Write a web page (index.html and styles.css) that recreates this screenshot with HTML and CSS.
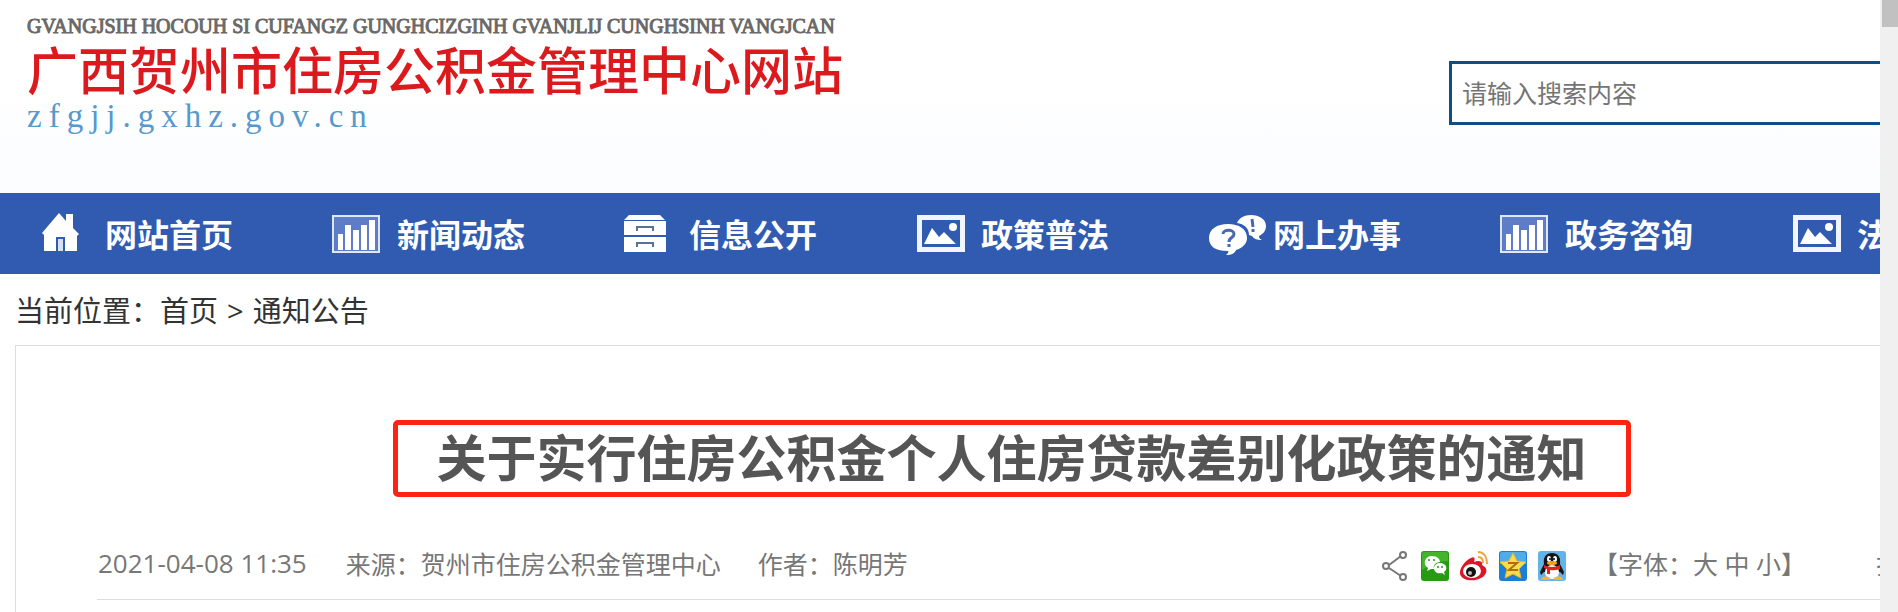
FILE: index.html
```
<!DOCTYPE html>
<html lang="zh-CN">
<head>
  <meta charset="utf-8">
  <meta name="viewport" content="width=device-width, initial-scale=1">
  <title>关于实行住房公积金个人住房贷款差别化政策的通知</title>
  <link rel="stylesheet" href="styles.css">
</head>
<body>

<!-- icons used more than once -->
<svg class="defs" aria-hidden="true">
  <symbol id="i-chart" viewBox="0 0 62 44">
    <rect x="3" y="4" width="46" height="36" fill="#5f7dc6" stroke="#dfe8fa" stroke-width="2"/>
    <path fill="#fff" d="M8 22h5v16H8zM15 13h6v25h-6zM23 18h6v20h-6zM31 13h6v25h-6zM39 8h6v30h-6z"/>
  </symbol>
  <symbol id="i-photo" viewBox="0 0 62 44">
    <path fill="#f0f5ff" fill-rule="evenodd" d="M3 3h48v37H3zM8 8v27h38V8z"/>
    <path fill="#fff" d="M10 32l8-16 7 9 5-5 12 12z"/>
    <circle cx="39" cy="15" r="4" fill="#fff"/>
  </symbol>
</svg>

<div class="window">
  <div class="view">
    <div class="page">

      <header class="header">
        <a class="logo" href="#">
          <span class="logo-za">GVANGJSIH HOCOUH SI CUFANGZ GUNGHCIZGINH GVANJLIJ CUNGHSINH VANGJCAN</span>
          <span class="logo-cn">广西贺州市住房公积金管理中心网站</span>
          <span class="logo-url">zfgjj.gxhz.gov.cn</span>
        </a>
        <form class="search">
          <input type="text" placeholder="请输入搜索内容" aria-label="搜索">
        </form>
      </header>

      <nav class="nav">
        <a href="#">
          <svg viewBox="0 0 62 44"><path fill="#fff" d="M4 21L21 1l7 8V2h7v14l6 6-2 2v15H27V25H18v14H6V23z"/><path fill="#d5e0f5" d="M20 27h5v12h-5z"/></svg>
          <span>网站首页</span>
        </a>
        <a href="#">
          <svg><use href="#i-chart"/></svg>
          <span>新闻动态</span>
        </a>
        <a href="#">
          <svg viewBox="0 0 62 44"><path fill="#fff" d="M7 3h31l5 5H2zM2 9h42v14H2zM2 25h42v15H2z"/><path fill="none" stroke="#56709f" stroke-width="2" d="M15 19v-4h16v4M15 35v-4h16v4"/></svg>
          <span>信息公开</span>
        </a>
        <a href="#">
          <svg><use href="#i-photo"/></svg>
          <span>政策普法</span>
        </a>
        <a href="#">
          <svg viewBox="0 0 62 44">
            <path fill="#fff" d="M45 3c8 0 15 4 15 11 0 5-3 8-7 10 0 2 1 3 3 4-5 0-8-1-10-4l-3-1c0-7-5-11-12-12 2-5 7-8 14-8z"/>
            <path fill="#fff" d="M22 12c11 0 19 5 19 14 0 6-5 10-11 12-1 3-4 5-10 5 2-2 3-3 2-4C10 39 3 35 3 26s8-14 19-14z"/>
            <path fill="none" stroke="#4968ad" stroke-width="3" d="M17 22c0-5 11-5 11 0 0 4-5 3-5 8M23 32v3"/>
            <path fill="none" stroke="#4968ad" stroke-width="3" d="M46 7l1 8M47 17v3"/>
          </svg>
          <span>网上办事</span>
        </a>
        <a href="#">
          <svg><use href="#i-chart"/></svg>
          <span>政务咨询</span>
        </a>
        <a href="#">
          <svg><use href="#i-photo"/></svg>
          <span>法规文件</span>
        </a>
      </nav>

      <div class="crumbs">当前位置：<a href="#">首页</a><i>&gt;</i><a href="#">通知公告</a></div>

      <main class="article">
        <h1>关于实行住房公积金个人住房贷款差别化政策的通知</h1>
        <div class="meta">
          <span class="date">2021-04-08 11:35</span>
          <span class="source">来源：贺州市住房公积金管理中心</span>
          <span>作者：陈明芳</span>

          <div class="share">
            <a href="#" title="分享"><svg viewBox="0 0 28 30"><g fill="none" stroke="#777" stroke-width="2"><path d="M7 14L19 5M7 17l12 8"/><circle cx="4" cy="15" r="3"/><circle cx="21" cy="4" r="3"/><circle cx="21" cy="26" r="3"/></g></svg></a>
            <a href="#" title="微信"><svg viewBox="0 0 28 30"><rect width="28" height="30" rx="3" fill="#269a10"/><path fill="#43b52c" d="M3 1h22q2 0 2 3v6Q14 10 1 19V4q0-3 2-3z"/><path fill="#fff" d="M11 5c5 0 8 3 8 6-5 0-7 4-6 7h-3l-4 2 1-3c-6-4-3-12 4-12zM19 12c7 0 8 7 4 9l1 3-3-2c-5 1-8-1-8-5 0-3 3-5 6-5z"/><g fill="#269a10"><circle cx="8" cy="9" r="1"/><circle cx="13" cy="9" r="1"/><circle cx="17" cy="16" r="1"/><circle cx="21" cy="16" r="1"/></g></svg></a>
            <a href="#" title="新浪微博"><svg viewBox="0 0 28 30"><path fill="#dc1828" d="M11 7c4-2 4 1 3 4 5-2 9-1 8 3 7 3 5 10-1 13-7 4-19 3-21-4-1-6 6-14 11-16z"/><ellipse cx="12" cy="20" rx="9" ry="7" fill="#fff"/><circle cx="11" cy="21" r="5" fill="#111"/><circle cx="10" cy="22" r="2" fill="#bbb"/><path fill="none" stroke="#f0a33c" stroke-width="2" d="M18 1c6 0 9 5 9 12M18 6c3 0 5 2 5 6"/></svg></a>
            <a href="#" title="QQ空间"><svg viewBox="0 0 28 30"><rect width="28" height="30" rx="3" fill="#1c7fd4"/><path fill="#50ace8" d="M3 1h22q2 0 2 3v9H1V4q0-3 2-3z"/><path fill="#fbdc4e" stroke="#e9b528" d="M14 2l4 8 9 1-7 7 2 9-8-4-8 4 2-9-7-7 9-1z"/><path fill="none" stroke="#b56b12" stroke-width="2" d="M9 12h9l-8 7h9"/></svg></a>
            <a href="#" title="QQ"><svg viewBox="0 0 28 30"><rect width="28" height="30" rx="3" fill="#62b4e8"/><path fill="#161616" d="M14 2c6 0 9 4 8 11l4 8-1 3-3-3H6l-3 3-1-3 4-8C5 6 8 2 14 2z"/><ellipse cx="14" cy="21" rx="7" ry="7" fill="#fff"/><ellipse cx="11" cy="8" rx="2" ry="3" fill="#fff"/><ellipse cx="17" cy="8" rx="2" ry="3" fill="#fff"/><circle cx="12" cy="8" r="1"/><circle cx="16" cy="8" r="1"/><ellipse cx="14" cy="12" rx="5" ry="2" fill="#f4a31f"/><path fill="#e0211c" d="M6 14q8 4 16 0v4q-6 2-10 1v4H9v-5l-3-1z"/><path fill="#f4b13c" d="M3 28q3-5 9-1v2H3zM25 28q-3-5-9-1v2h9z"/></svg></a>
          </div>

          <span class="fontsize">【字体：<a href="#">大</a> <a href="#">中</a> <a href="#">小</a>】</span>
          <a class="print" href="#">打印</a>
        </div>
      </main>

    </div>
  </div>
  <div class="scrollbar"><div class="thumb"></div></div>
</div>

</body>
</html>
```
FILE: styles.css
```
* {
  box-sizing: border-box;
}
body {
  margin: 0;
  background: #fff;
  color: #333;
  font-family: "Open Sans", "Noto Sans CJK SC", sans-serif;
}
a {
  color: inherit;
  text-decoration: none;
}
.defs {
  display: none;
}

.window {
  display: flex;
  height: 100vh;
  overflow: hidden;
}
.view {
  flex: 1;
  min-width: 0;
  overflow: hidden;
}
/* page is wider than the view, the rest is cut off on the right */
.page {
  width: calc(100% + 145px);
}
.scrollbar {
  width: 18px;
  padding-left: 2px;
  background: #f0f0f0;
}
.thumb {
  height: 27px;
  background: #c1c1c1;
}

/* header */
.header {
  display: flex;
  justify-content: space-between;
  align-items: flex-start;
  height: 193px;
  padding: 12px 15px 0 27px;
  background: linear-gradient(#fff 40%, #fbfcff);
}
.logo {
  display: flex;
  flex-direction: column;
  white-space: nowrap;
}
.logo-za {
  font: 20px/28px "Liberation Serif", serif;
  color: #6b6967;
  -webkit-text-stroke: 1px #6b6967;
}
.logo-cn {
  font: 500 51px/56px "Noto Sans CJK SC", sans-serif;
  color: #dc1a1e;
}
.logo-url {
  font: 33px/40px "Liberation Serif", serif;
  letter-spacing: 7px;
  color: #5699cc;
}
.search {
  width: 561px;
  margin-top: 49px;
}
.search input {
  display: block;
  width: 100%;
  height: 64px;
  padding: 0 10px 2px;
  border: 3px solid #0d4f8b;
  background: #fff;
  font: 25px "Noto Sans CJK SC", sans-serif;
  outline: none;
}
.search input::placeholder {
  color: #757575;
}

/* nav */
.nav {
  display: flex;
  height: 81px;
  padding-left: 38px;
  overflow: hidden;
  background: #305bb0;
}
.nav a {
  display: flex;
  flex: 0 0 292px;
  align-items: center;
  gap: 5px;
  color: #fff;
  font: bold 32px/40px "Noto Sans CJK SC", sans-serif;
}
.nav span {
  padding-bottom: 2px;
}
.nav svg {
  width: 62px;
  height: 44px;
}

.crumbs {
  padding: 17px 15px 14px;
  font-size: 29px;
  line-height: 40px;
}
.crumbs i {
  margin: 0 9px;
  font-style: normal;
}

/* article */
.article {
  margin: 0 15px;
  padding: 74px 83px 60px 81px;
  border: 1px solid #ddd;
}
.article h1 {
  width: fit-content;
  margin: 0 auto;
  padding: 0 39px 6px;
  border: 5px solid #ff2313;
  border-radius: 5px;
  color: #555;
  font: bold 50px/61px "Noto Sans CJK SC", sans-serif;
}
.meta {
  display: flex;
  align-items: center;
  height: 70px;
  margin-top: 33px;
  padding: 0 0 4px 1px;
  border-bottom: 1px solid #ddd;
  color: #777;
  font-size: 25px;
  white-space: nowrap;
}
.date {
  font-size: 26px;
}
.source {
  margin: 0 37px 0 39px;
}
.share {
  display: flex;
  gap: 11px;
  margin: 6px 0 0 auto;
}
.share svg {
  display: block;
  width: 28px;
  height: 30px;
}
.fontsize {
  margin-left: 27px;
}
.print {
  margin-left: 70px;
}
```
